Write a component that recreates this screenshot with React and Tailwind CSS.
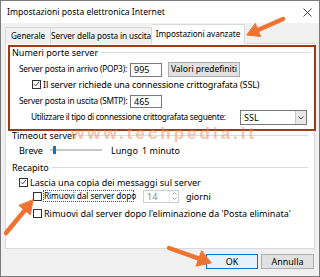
import React from 'react';

const Check = ({ checked = false }) => (
  <span className="w-[9px] h-[9px] border border-[#333] bg-white flex items-center justify-center shrink-0">
    {checked && (
      <svg width="8" height="8" viewBox="0 0 8 8">
        <path d="M1 4.2 L3 6.2 L7 1.5" fill="none" stroke="#222" strokeWidth="1" />
      </svg>
    )}
  </span>
);

const GroupHead = ({ label }) => (
  <div className="flex items-center gap-[3px] h-[10px]">
    <span>{label}</span>
    <span className="flex-1 h-px bg-[#dcdcdc]" />
  </div>
);

const Arrows = () => (
  <svg className="absolute left-0 top-0 pointer-events-none" width="320" height="277" viewBox="0 0 320 277">
    <g fill="#ee7330" stroke="#ee7330" strokeLinecap="round">
      <line x1="282" y1="18" x2="257" y2="29" strokeWidth="4.5" />
      <polygon points="246,34 259.6,35.5 254.4,22.7" strokeWidth="1" />
      <line x1="5" y1="232" x2="24" y2="209" strokeWidth="4.5" />
      <polygon points="32,199 29.3,213.8 18.2,204.6" strokeWidth="1" />
      <line x1="168" y1="247" x2="198" y2="257.6" strokeWidth="4.5" />
      <polygon points="210,262 195.1,265.1 200.5,250.1" strokeWidth="1" />
    </g>
  </svg>
);

export default function App() {
  return (
    <div className="relative w-[320px] h-[277px] overflow-hidden bg-[#f0f0f0] border border-[#7a7a7a] font-['Noto_Sans',sans-serif] text-[9px] leading-none text-black whitespace-nowrap flex flex-col">
      {/* Title bar */}
      <div className="h-[22px] bg-white flex items-center justify-between pl-[6px] pr-[7px] shrink-0">
        <span className="text-[8.6px]">Impostazioni posta elettronica Internet</span>
        <svg width="9" height="9" viewBox="0 0 9 9">
          <path d="M0.5 0.5 L8.5 8.5 M8.5 0.5 L0.5 8.5" stroke="#333" strokeWidth="0.9" />
        </svg>
      </div>

      <div className="px-[4px] flex flex-col">
        {/* Tabs */}
        <div className="flex items-end h-[21px] relative z-10 -mb-px text-[8.2px] tracking-[-0.1px]">
          <div className="w-[46px] h-[17px] flex items-center justify-center border border-b-0 border-[#d9d9d9] bg-[#f0f0f0]">Generale</div>
          <div className="w-[101px] h-[17px] flex items-center justify-center border border-l-0 border-b-0 border-[#d9d9d9] bg-[#f0f0f0]">Server della posta in uscita</div>
          <div className="w-[93px] h-[20px] flex items-center justify-center border border-l-0 border-b-0 border-[#d9d9d9] bg-white">Impostazioni avanzate</div>
        </div>

        {/* Panel */}
        <div className="h-[206px] bg-white border border-[#d9d9d9] flex flex-col pl-[2px]">
          <div className="mt-px h-[86px] border-2 border-[#9c3b17] -mr-[2px] flex flex-col">
            <div className="pl-[2px] pr-[4px]">
              <GroupHead label="Numeri porte server" />
            </div>
            <div className="flex items-center h-[15px] mt-[5px] pl-[9px]">
              <span className="w-[111px] text-[8.3px] tracking-[-0.2px]">Server posta in arrivo (POP3):</span>
              <span className="w-[32px] h-[14px] border border-[#7a7a7a] flex items-center pl-[3px]">995</span>
              <span className="ml-[6px] w-[72px] h-[15px] border border-[#adadad] bg-[#e1e1e1] flex items-center justify-center text-[8.5px]">Valori predefiniti</span>
            </div>
            <div className="flex items-center gap-[2px] h-[10px] mt-[2px] pl-[22px]">
              <Check checked />
              <span className="tracking-[-0.1px]">Il server richiede una connessione crittografata (SSL)</span>
            </div>
            <div className="flex items-center h-[14px] mt-[5px] pl-[9px]">
              <span className="w-[111px] text-[8.3px] tracking-[-0.2px]">Server posta in uscita (SMTP):</span>
              <span className="w-[32px] h-[13px] border border-[#7a7a7a] flex items-center pl-[3px]">465</span>
            </div>
            <div className="flex items-center h-[15px] mt-[2px] pl-[21px]">
              <span className="w-[209px] text-[8.3px] tracking-[-0.3px]">Utilizzare il tipo di connessione crittografata seguente:</span>
              <span className="w-[67px] h-[15px] border border-[#7a7a7a] flex items-center justify-between pl-[3px]">
                <span>SSL</span>
                <span className="w-[11px] h-full bg-[#e8e8e8] border-l border-[#c8c8c8] flex items-center justify-center">
                  <svg width="6" height="4" viewBox="0 0 6 4">
                    <path d="M0.5 0.5 L3 3 L5.5 0.5" fill="none" stroke="#333" strokeWidth="0.9" />
                  </svg>
                </span>
              </span>
            </div>
          </div>

          <div className="pl-[4px] pr-[6px] -mt-[1px]">
            <GroupHead label="Timeout server" />
          </div>
          <div className="flex items-center h-[12px] mt-[4px] pl-[11px]">
            <span className="w-[31px]">Breve</span>
            <span className="relative w-[52px] h-[12px] flex items-center">
              <span className="w-full h-[2px] bg-[#c8c8c8]" />
              <span className="absolute left-[3px] top-[2px] w-[3px] h-[8px] bg-[#0078d7]" />
            </span>
            <span className="ml-[9px] w-[31px]">Lungo</span>
            <span>1 minuto</span>
          </div>
          <div className="pl-[4px] pr-[6px] mt-[6px]">
            <GroupHead label="Recapito" />
          </div>
          <div className="flex items-center gap-[2px] h-[10px] mt-[5px] pl-[11px]">
            <Check checked />
            <span>Lascia una copia dei messaggi sul server</span>
          </div>
          <div className="flex items-center h-[14px] mt-[2px] pl-[25px]">
            <Check />
            <span className="ml-[1px] w-[91px] h-[12px] px-[1px] flex items-center outline outline-1 outline-dotted outline-[#555] -outline-offset-1 text-[8.3px] tracking-[-0.1px]">Rimuovi dal server dopo</span>
            <span className="ml-[9px] w-[36px] h-[13px] border border-[#cfcfcf] flex items-center justify-between pl-[3px] text-[#8a8a8a]">
              <span>14</span>
              <span className="w-[9px] h-full flex flex-col items-center justify-center gap-[2px] border-l border-[#e0e0e0]">
                <svg width="5" height="3" viewBox="0 0 5 3"><path d="M0.5 2.5 L2.5 0.5 L4.5 2.5" fill="none" stroke="#8a8a8a" strokeWidth="0.8" /></svg>
                <svg width="5" height="3" viewBox="0 0 5 3"><path d="M0.5 0.5 L2.5 2.5 L4.5 0.5" fill="none" stroke="#8a8a8a" strokeWidth="0.8" /></svg>
              </span>
            </span>
            <span className="ml-[7px]">giorni</span>
          </div>
          <div className="flex items-center gap-[2px] h-[10px] mt-[5px] pl-[25px]">
            <Check />
            <span>Rimuovi dal server dopo l'eliminazione da 'Posta eliminata'</span>
          </div>
        </div>
      </div>

      {/* Buttons */}
      <div className="flex justify-end gap-[3px] pr-[5px] mt-[5px]">
        <div className="w-[52px] h-[15px] border border-[#0078d7] bg-[#e5f1fb] flex items-center justify-center">OK</div>
        <div className="w-[53px] h-[15px] border border-[#adadad] bg-[#e1e1e1] flex items-center justify-center">Annulla</div>
      </div>

      {/* Watermark */}
      <div className="absolute left-[70px] top-[124px] font-['Liberation_Sans',sans-serif] font-bold text-[17px] tracking-[3px] text-[#f08a50]/50 pointer-events-none">
        www.techpedia.it
      </div>

      <Arrows />
    </div>
  );
}
